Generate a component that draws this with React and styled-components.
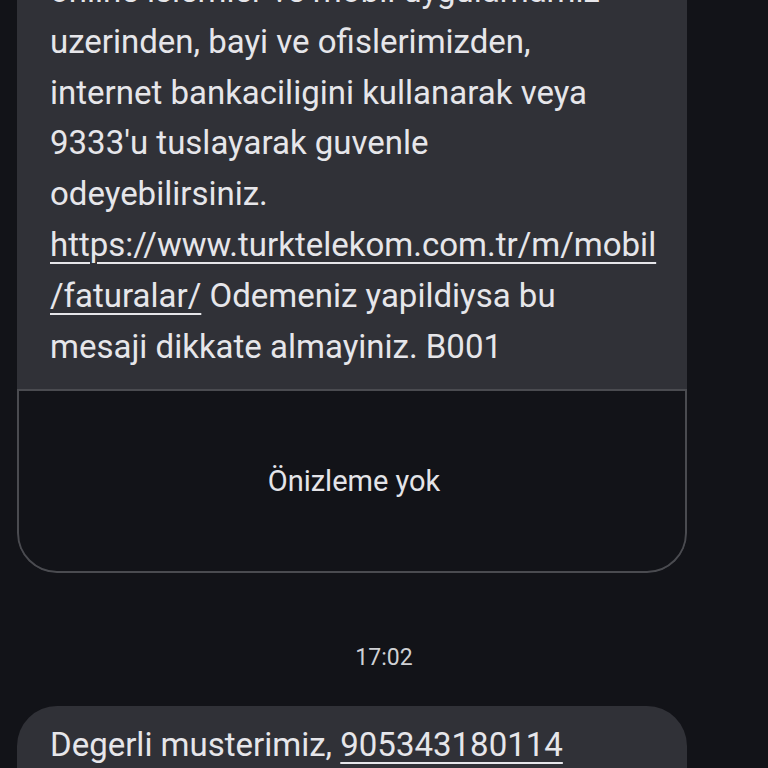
import styled, { createGlobalStyle } from 'styled-components';

const GlobalStyle = createGlobalStyle`
  html, body {
    margin: 0;
    padding: 0;
    background: #121318;
  }
`;

const Screen = styled.div`
  width: 768px;
  height: 768px;
  overflow: hidden;
  background: #121318;
  font-family: Roboto, "Noto Sans", sans-serif;
  color: #e6e6ea;
`;

const Thread = styled.div`
  display: flex;
  flex-direction: column;
  margin-top: -34px;
`;

const Bubble = styled.div`
  margin-left: 17px;
  width: 670px;
  background: #303137;
  border-radius: ${({ $top }) => ($top ? '40px 40px 0 0' : '0 0 40px 40px')};
  overflow: hidden;
`;

const Body = styled.div`
  padding: ${({ $pad }) => $pad || '0 10px 17px 33px'};
  font-size: 33px;
  line-height: 50.8px;
  white-space: nowrap;
`;

const Link = styled.span`
  text-decoration: underline;
  text-decoration-thickness: 2px;
  text-underline-offset: 6px;
`;

const Preview = styled.div`
  height: 180px;
  display: flex;
  align-items: center;
  justify-content: center;
  padding-left: 4px;
  background: #121318;
  border: 2px solid #4a4b50;
  border-radius: 0 0 40px 40px;
  font-size: 29px;
  color: #e4e4e8;
`;

const Stamp = styled.div`
  text-align: center;
  margin: 71px 0 0;
  height: 62px;
  font-size: 23px;
  color: #cfd0d4;
`;

const App = () => (
  <Screen>
    <GlobalStyle />
    <Thread>
      <Bubble>
        <Body>
          online islemler ve mobil uygulamamiz
          <br />
          uzerinden, bayi ve ofislerimizden,
          <br />
          internet bankaciligini kullanarak veya
          <br />
          9333'u tuslayarak guvenle
          <br />
          odeyebilirsiniz.
          <br />
          <Link>https://www.turktelekom.com.tr/m/mobil</Link>
          <br />
          <Link>/faturalar/</Link> Odemeniz yapildiysa bu
          <br />
          mesaji dikkate almayiniz. B001
        </Body>
        <Preview>Önizleme yok</Preview>
      </Bubble>
      <Stamp>17:02</Stamp>
      <Bubble $top>
        <Body $pad="14px 20px 40px 33px">
          Degerli musterimiz, <Link>905343180114</Link>
        </Body>
      </Bubble>
    </Thread>
  </Screen>
);

export default App;
